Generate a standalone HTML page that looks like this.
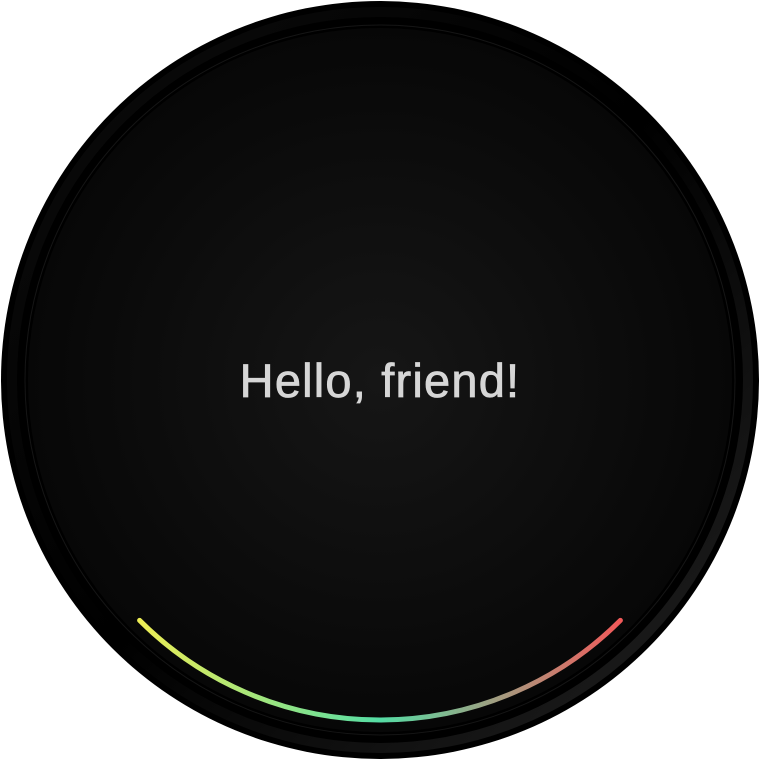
<!DOCTYPE html>
<html><head><style>
html,body{margin:0;padding:0;background:#fff;width:760px;height:760px;overflow:hidden}
.t{position:absolute;left:0;width:760px;top:351px;text-align:center;font-family:"Liberation Sans",sans-serif;font-size:47px;color:#d6d6d6;line-height:60px;letter-spacing:1.2px;-webkit-text-stroke:0.8px #d6d6d6}
</style></head><body>
<svg width="760" height="760" style="position:absolute;left:0;top:0">
<defs>
<radialGradient id="face" cx="50%" cy="50%" r="50%">
<stop offset="0" stop-color="#161616"/><stop offset="1" stop-color="#070707"/>
</radialGradient>
<linearGradient id="bez" x1="0" y1="0" x2="1" y2="1">
<stop offset="0" stop-color="#0c0c0c"/><stop offset="0.5" stop-color="#000"/><stop offset="1" stop-color="#222"/>
</linearGradient>
<linearGradient id="arc" x1="139" y1="0" x2="620" y2="0" gradientUnits="userSpaceOnUse">
<stop offset="0" stop-color="#eeee55"/><stop offset="0.5" stop-color="#55dda5"/><stop offset="1" stop-color="#f25a5a"/>
</linearGradient>
</defs>
<circle cx="380" cy="380" r="379" fill="#000"/>
<circle cx="380" cy="380" r="368" fill="none" stroke="url(#bez)" stroke-width="10"/>
<circle cx="380" cy="380" r="355" fill="none" stroke="#151515" stroke-width="1"/>
<circle cx="380" cy="380" r="352" fill="url(#face)"/>
<path d="M139.6 620.4 A340 340 0 0 0 620.4 620.4" fill="none" stroke="url(#arc)" stroke-width="5" stroke-linecap="round"/>
</svg>
<div class="t">Hello, friend!</div>
</body></html>
